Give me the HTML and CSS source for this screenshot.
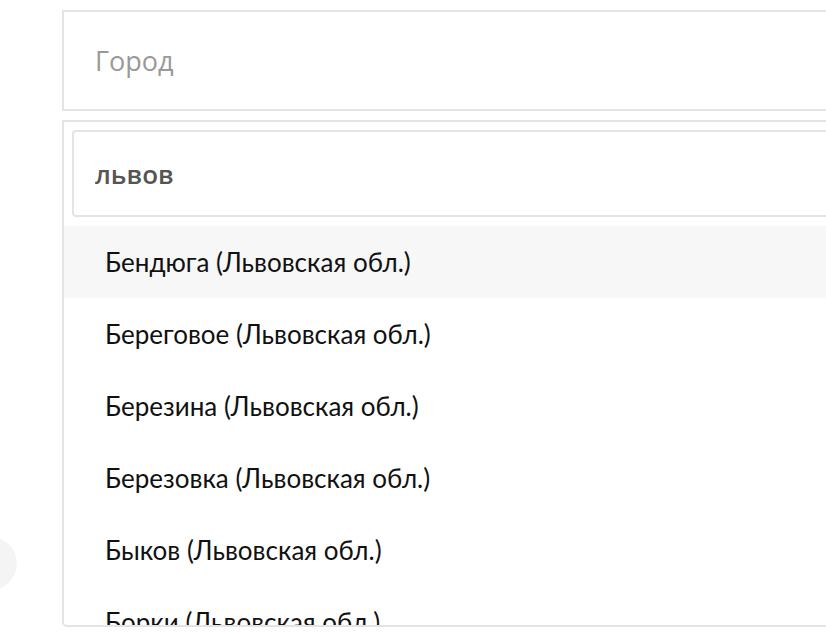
FILE: index.html
```html
<!DOCTYPE html>
<html lang="ru">
  <head>
    <meta charset="UTF-8" />
    <meta name="viewport" content="width=device-width, initial-scale=1.0" />
    <title>Город</title>
    <link rel="stylesheet" href="styles.css">
  </head>
  <body>
    <div class="bubble"></div>
    <div class="container">
      <div class="select">
        <span class="placeholder">Город</span>
      </div>
      <div class="dropdown">
        <div class="search-con">
          <input type="text" class="search" value="львов" />
        </div>
        <ul class="options">
          <li class="option active">Бендюга (Львовская обл.)</li>
          <li class="option">Береговое (Львовская обл.)</li>
          <li class="option">Березина (Львовская обл.)</li>
          <li class="option">Березовка (Львовская обл.)</li>
          <li class="option">Быков (Львовская обл.)</li>
          <li class="option">Борки (Львовская обл.)</li>
        </ul>
      </div>
    </div>
  </body>
</html>
```

FILE: styles.css
```css
* {
  margin: 0;
  padding: 0;
  box-sizing: border-box;
}
body {
  position: relative;
  height: 632px;
  overflow: hidden;
  background-color: #fff;
  font-family: Lato, "Open Sans", sans-serif;
}
.bubble {
  position: absolute;
  left: -36px;
  top: 537px;
  width: 53px;
  height: 53px;
  border-radius: 50%;
  background-color: #f4f4f4;
}
.container {
  display: flex;
  flex-direction: column;
  gap: 9px;
  width: 820px;
  margin: 10px 0 0 62px;
}
.select {
  display: flex;
  align-items: center;
  height: 101px;
  padding-left: 31px;
  border: 2px solid #e4e4e4;
}
.placeholder {
  font-family: "Open Sans", sans-serif;
  font-size: 27px;
  color: #999;
}
.dropdown {
  height: 507px;
  overflow: hidden;
  border: 2px solid #e4e4e4;
  border-radius: 0 0 5px 5px;
}
.search-con {
  padding: 8px 8px 9px;
}
.search {
  width: 100%;
  height: 87px;
  padding-left: 21px;
  border: 2px solid #e4e4e4;
  border-radius: 4px;
  outline: none;
  font-family: "Open Sans", sans-serif;
  font-size: 26px;
  font-weight: 600;
  color: #555;
}
.options {
  list-style: none;
}
.option {
  display: flex;
  align-items: center;
  height: 72px;
  padding-left: 41px;
  font-size: 26px;
  color: #111;
}
.option.active {
  background-color: #f7f7f7;
}
```
